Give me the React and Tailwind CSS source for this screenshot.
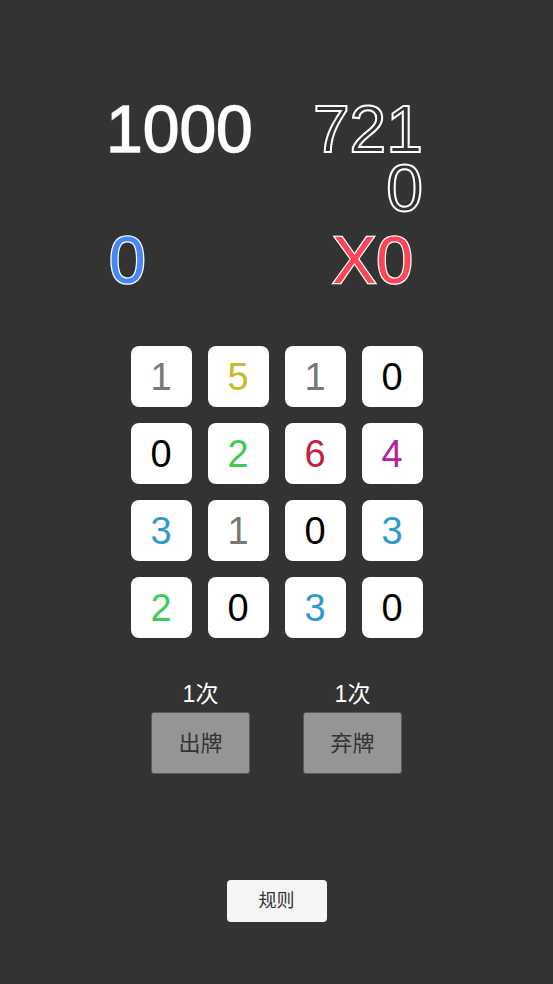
import React from 'react';

const cards = [
  [1, '#777777'], [5, '#c9b92e'], [1, '#777777'], [0, '#000000'],
  [0, '#000000'], [2, '#3ecb55'], [6, '#c8203c'], [4, '#b8229a'],
  [3, '#2e9ac8'], [1, '#777777'], [0, '#000000'], [3, '#2e9ac8'],
  [2, '#3ecb55'], [0, '#000000'], [3, '#2e9ac8'], [0, '#000000'],
];

export default function App() {
  return (
    <div
      className="min-h-[984px] w-full bg-[#333333] flex flex-col"
      style={{ fontFamily: '"Liberation Sans", "Noto Sans CJK SC", sans-serif' }}
    >
      {/* score area */}
      <div className="pt-[100px]">
        <div className="flex justify-between items-start ml-[106px] w-[317px]">
          <div className="text-[66px] leading-[59px] text-white [-webkit-text-stroke:1.4px_#eeeeee] [paint-order:stroke_fill]">1000</div>
          <div className="text-[66px] leading-[59px] text-right text-transparent [-webkit-text-stroke:2px_white]">
            721
            <br />
            0
          </div>
        </div>
        <div className="flex justify-between items-start ml-[109px] w-[304px] mt-[13px]">
          <div className="text-[66px] leading-[59px] text-[#4488f8] [-webkit-text-stroke:2.5px_white] [paint-order:stroke_fill]">0</div>
          <div className="text-[66px] leading-[59px] text-[#ff4455] [-webkit-text-stroke:2.5px_white] [paint-order:stroke_fill]">X0</div>
        </div>
      </div>

      {/* card grid */}
      <div className="mx-auto mt-[56px] grid grid-cols-4 gap-[16px]">
        {cards.map(([n, c], i) => (
          <div
            key={i}
            className="w-[61px] h-[61px] rounded-[8px] bg-white flex items-center justify-center text-[38px] leading-none"
            style={{ color: c }}
          >
            {n}
          </div>
        ))}
      </div>

      {/* actions */}
      <div className="mx-auto mt-[43px] flex gap-[53px]">
        {['出牌', '弃牌'].map((label) => (
          <div key={label} className="flex flex-col items-center">
            <div className="text-[23px] leading-[26px] text-white">1次</div>
            <button className="mt-[5px] w-[99px] h-[62px] bg-[#959595] border border-[#5a5a5a] rounded-[3px] text-[22px] text-[#333333]">
              {label}
            </button>
          </div>
        ))}
      </div>

      <div className="mx-auto mt-[106px]">
        <button className="w-[100px] h-[42px] bg-[#f5f5f5] rounded-[4px] text-[18px] text-[#333333]">规则</button>
      </div>
    </div>
  );
}
